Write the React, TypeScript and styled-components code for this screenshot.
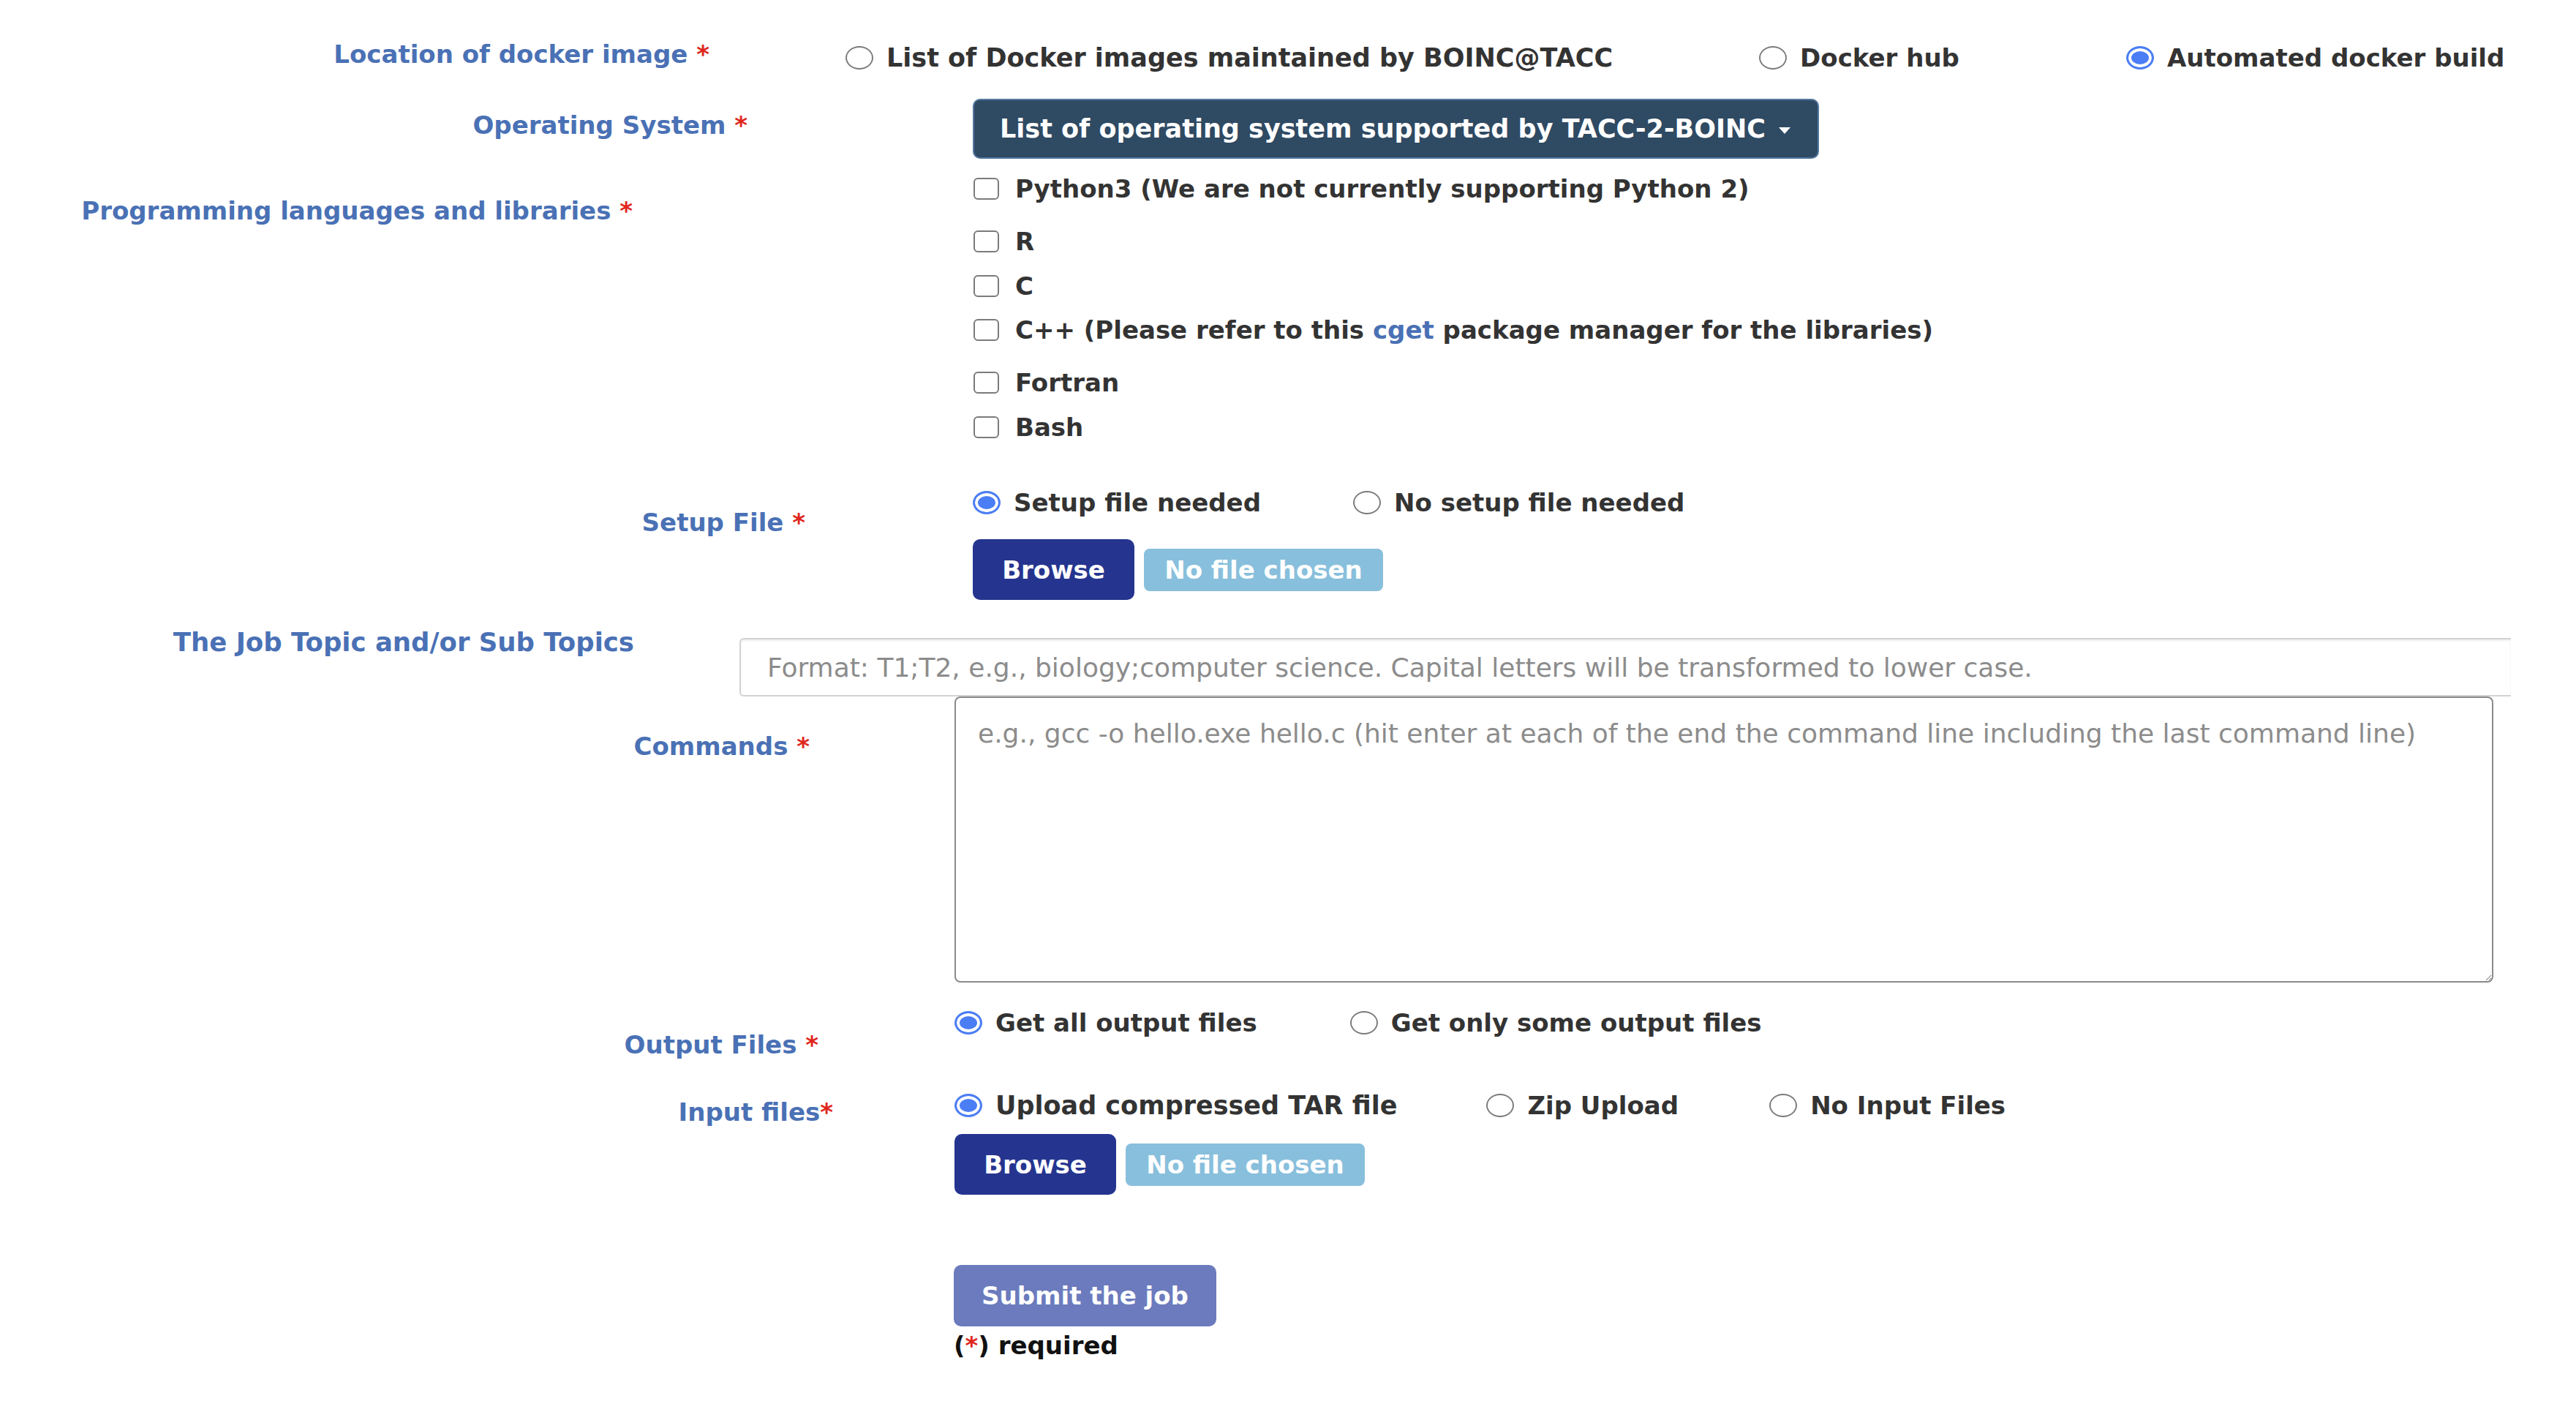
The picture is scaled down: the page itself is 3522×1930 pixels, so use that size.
import styled, { createGlobalStyle } from "styled-components";

const GlobalStyle = createGlobalStyle`
  html, body {
    margin: 0;
    padding: 0;
    background: #ffffff;
  }
  body {
    font-family: "DejaVu Sans", "Liberation Sans", sans-serif;
    color: #333333;
  }
  * {
    box-sizing: border-box;
  }
`;

const languages = [
  { name: "Python3 (We are not currently supporting Python 2)", mt: 0 },
  { name: "R", mt: 32 },
  { name: "C", mt: 21 },
  { name: "C++", mt: 20, link: true },
  { name: "Fortran", mt: 32 },
  { name: "Bash", mt: 21 },
];

export default function App() {
  return (
    <>
      <GlobalStyle />
      <Page>
        <Row>
          <Label $end={970}>
            Location of docker image <Star>*</Star>
          </Label>
          <Field $ml={186} $pt={5}>
            <OptionGroup>
              <Option $wide>
                <RadioMark />
                List of Docker images maintained by BOINC@TACC
              </Option>
              <Option $ml={200}>
                <RadioMark />
                Docker hub
              </Option>
              <Option $ml={228}>
                <RadioMark $checked />
                Automated docker build
              </Option>
            </OptionGroup>
          </Field>
        </Row>

        <Row $mt={36}>
          <Label $end={1022} $pt={16}>
            Operating System <Star>*</Star>
          </Label>
          <Field $ml={308}>
            <DropdownButton type="button">
              List of operating system supported by TACC-2-BOINC
              <Caret />
            </DropdownButton>
          </Field>
        </Row>

        <Row $mt={21}>
          <Label $end={865} $pt={30}>
            Programming languages and libraries <Star>*</Star>
          </Label>
          <Field $ml={466}>
            {languages.map((lang) => (
              <CheckItem key={lang.name} $mt={lang.mt}>
                <CheckMark />
                {lang.link ? (
                  <span>
                    C++ (Please refer to this <Link>cget</Link> package manager for the libraries)
                  </span>
                ) : (
                  lang.name
                )}
              </CheckItem>
            ))}
          </Field>
        </Row>

        <Row $mt={63}>
          <Label $end={1101} $pt={27}>
            Setup File <Star>*</Star>
          </Label>
          <Field $ml={229}>
            <OptionGroup>
              <Option>
                <RadioMark $checked />
                Setup file needed
              </Option>
              <Option $ml={126}>
                <RadioMark />
                No setup file needed
              </Option>
            </OptionGroup>
            <FileRow $mt={30}>
              <BrowseButton type="button">Browse</BrowseButton>
              <FileStatus>No file chosen</FileStatus>
            </FileRow>
          </Field>
        </Row>

        <Row $mt={38}>
          <Label $end={867} $size={35.5}>
            The Job Topic and/or Sub Topics
          </Label>
          <Field $ml={144} $pt={14}>
            <TopicInput placeholder="Format: T1;T2, e.g., biology;computer science. Capital letters will be transformed to lower case." />
          </Field>
        </Row>

        <Row>
          <Label $end={1107} $pt={48}>
            Commands <Star>*</Star>
          </Label>
          <Field $ml={198}>
            <CommandArea placeholder="e.g., gcc -o hello.exe hello.c (hit enter at each of the end the command line including the last command line)" />
          </Field>
        </Row>

        <Row $mt={35}>
          <Label $end={1119} $pt={30}>
            Output Files <Star>*</Star>
          </Label>
          <Field $ml={186}>
            <OptionGroup>
              <Option>
                <RadioMark $checked />
                Get all output files
              </Option>
              <Option $ml={127}>
                <RadioMark />
                Get only some output files
              </Option>
            </OptionGroup>
          </Field>
        </Row>

        <Row $mt={43}>
          <Label $end={1139} $pt={9}>
            Input files<Star>*</Star>
          </Label>
          <Field $ml={166}>
            <OptionGroup>
              <Option $wide>
                <RadioMark $checked />
                Upload compressed TAR file
              </Option>
              <Option $ml={122}>
                <RadioMark />
                Zip Upload
              </Option>
              <Option $ml={124}>
                <RadioMark />
                No Input Files
              </Option>
            </OptionGroup>
            <FileRow $mt={19}>
              <BrowseButton type="button">Browse</BrowseButton>
              <FileStatus>No file chosen</FileStatus>
            </FileRow>
          </Field>
        </Row>

        <Footer>
          <SubmitButton type="button">Submit the job</SubmitButton>
          <Required>
            (<Star>*</Star>) required
          </Required>
        </Footer>
      </Page>
    </>
  );
}

const Page = styled.div`
  width: 3522px;
  min-height: 1930px;
  padding-top: 54px;
  font-size: 34px;
  line-height: 40px;
  font-weight: 700;
`;

const Row = styled.div<{ $mt?: number }>`
  display: flex;
  align-items: flex-start;
  margin-top: ${({ $mt }) => $mt ?? 0}px;
`;

const Label = styled.div<{ $end: number; $pt?: number; $size?: number }>`
  flex: 0 0 ${({ $end }) => $end}px;
  padding-top: ${({ $pt }) => $pt ?? 0}px;
  font-size: ${({ $size }) => $size ?? 34}px;
  text-align: right;
  color: #4a71b5;
  white-space: nowrap;
`;

const Star = styled.span`
  color: #e0261c;
`;

const Field = styled.div<{ $ml: number; $pt?: number }>`
  display: flex;
  flex-direction: column;
  margin-left: ${({ $ml }) => $ml}px;
  padding-top: ${({ $pt }) => $pt ?? 0}px;
`;

const OptionGroup = styled.div`
  display: flex;
  align-items: center;
`;

const Option = styled.label<{ $ml?: number; $wide?: boolean }>`
  display: flex;
  align-items: center;
  gap: 18px;
  margin-left: ${({ $ml }) => $ml ?? 0}px;
  font-size: ${({ $wide }) => ($wide ? "35px" : "34px")};
  white-space: nowrap;
  color: #333333;
`;

const RadioMark = styled.span<{ $checked?: boolean }>`
  flex: 0 0 38px;
  height: 32px;
  border-radius: 50%;
  border: ${({ $checked }) => ($checked ? "3px solid #4b7ef5" : "2.5px solid #7b7b7b")};
  background: ${({ $checked }) => ($checked ? "#4b7ef5" : "#ffffff")};
  box-shadow: ${({ $checked }) => ($checked ? "inset 0 0 0 4px #ffffff" : "none")};
`;

const DropdownButton = styled.button`
  display: flex;
  align-items: center;
  gap: 18px;
  width: 1157px;
  height: 82px;
  padding: 0 0 0 35px;
  background: #2f4a63;
  border: 2px solid #52779f;
  border-radius: 10px;
  color: #ffffff;
  font-family: inherit;
  font-size: 35px;
  font-weight: 700;
  white-space: nowrap;
`;

const Caret = styled.span`
  width: 0;
  height: 0;
  margin-top: 4px;
  border-left: 8px solid transparent;
  border-right: 8px solid transparent;
  border-top: 9px solid #ffffff;
`;

const CheckItem = styled.label<{ $mt: number }>`
  display: flex;
  align-items: center;
  gap: 22px;
  margin-top: ${({ $mt }) => $mt}px;
  white-space: nowrap;
`;

const CheckMark = styled.span`
  flex: 0 0 35px;
  height: 30px;
  border: 2.5px solid #7b7b7b;
  border-radius: 6px;
  background: #ffffff;
`;

const Link = styled.a`
  color: #4a71b5;
`;

const FileRow = styled.div<{ $mt: number }>`
  display: flex;
  align-items: center;
  gap: 13px;
  margin-top: ${({ $mt }) => $mt}px;
`;

const BrowseButton = styled.button`
  width: 221px;
  height: 83px;
  background: #25358f;
  border: none;
  border-radius: 10px;
  color: #ffffff;
  font-family: inherit;
  font-size: 34px;
  font-weight: 700;
`;

const FileStatus = styled.span`
  display: flex;
  align-items: center;
  justify-content: center;
  width: 327px;
  height: 58px;
  background: #88bfdc;
  border-radius: 8px;
  color: #ffffff;
  white-space: nowrap;
`;

const TopicInput = styled.input`
  width: 2422px;
  height: 80px;
  padding: 0 0 0 36px;
  border: 2px solid #d2d2d2;
  border-right: none;
  border-radius: 6px 0 0 6px;
  box-shadow: inset 0 2px 3px rgba(0, 0, 0, 0.07);
  font-family: inherit;
  font-size: 36px;
  font-weight: 400;
  color: #333333;
  &::placeholder {
    color: #8c8c8c;
  }
`;

const CommandArea = styled.textarea`
  width: 2104px;
  height: 391px;
  padding: 29px 30px;
  border: 2px solid #8a8a8a;
  border-radius: 8px;
  font-family: inherit;
  font-size: 36px;
  line-height: 40px;
  font-weight: 400;
  color: #333333;
  &::placeholder {
    color: #8c8c8c;
  }
`;

const Footer = styled.div`
  display: flex;
  flex-direction: column;
  align-items: flex-start;
  margin: 96px 0 0 1304px;
`;

const SubmitButton = styled.button`
  width: 359px;
  height: 84px;
  background: #6b7bbd;
  border: none;
  border-radius: 10px;
  color: #ffffff;
  font-family: inherit;
  font-size: 34px;
  font-weight: 700;
`;

const Required = styled.div`
  margin-top: 6px;
  color: #111111;
`;
